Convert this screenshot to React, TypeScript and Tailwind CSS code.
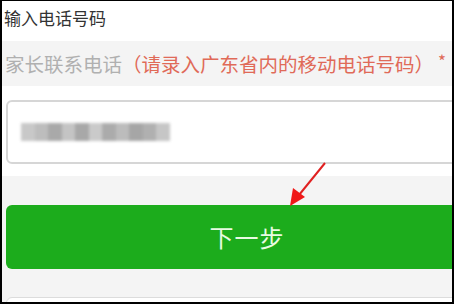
import React from 'react';

const blurBlocks = [
  '#c8c8c8', '#bdbdbd', '#a9a9a9', '#c4c4c4', '#a8a8a8', '#cacaca', '#ababab', '#bcbcbc', '#a6a6a6', '#b0b0b0', '#c6c6c6',
];

const App: React.FC = () => {
  return (
    <div
      className="relative w-[454px] h-[304px] overflow-hidden bg-white border-black border-l-2 border-r-2 border-t border-b-2"
      style={{ fontFamily: '"Noto Sans CJK SC", "Noto Sans", sans-serif' }}
    >
      {/* 标题 */}
      <div className="h-[40px] pl-[2px] pt-[5px] text-[17px] leading-[24px] text-[#333333]">输入电话号码</div>

      {/* 标签 */}
      <div className="h-[45px] bg-[#f4f4f4] flex items-center pl-[3px] text-[19.5px] leading-none whitespace-nowrap">
        <span className="text-[#b0b0b0]">家长联系电话</span>
        <span className="text-[#e06a58]">（请录入广东省内的移动电话号码）</span>
        <span className="text-[#e06a58] ml-[4px] text-[17px] -mt-[6px]">*</span>
      </div>

      {/* 输入框 */}
      <div className="bg-white pt-[14px] pb-[12px] pl-[4px]">
        <div className="w-[520px] h-[64px] border-2 border-[#d6d6d6] rounded-[6px] flex items-center pl-[13px]">
          <div className="flex blur-[1.5px]">
            {blurBlocks.map((c, i) => (
              <div key={i} className="w-[13.5px] h-[18px]" style={{ backgroundColor: c }} />
            ))}
          </div>
        </div>
      </div>

      {/* 按钮区 */}
      <div className="bg-[#f4f4f4] pt-[29px] pl-[4px] h-[200px]">
        <div className="w-[482px] h-[64px] rounded-[6px] bg-[#1cac1c] flex items-center justify-center text-[24px] text-[#e8fbe2] tracking-[1px]">
          下一步
        </div>
        <div className="mt-[28px] w-[520px] h-[40px] bg-white border border-[#dcdcdc] rounded-[6px]" />
      </div>

      {/* 红色箭头 */}
      <svg className="absolute left-0 top-0" width="454" height="304" viewBox="0 0 454 304">
        <line x1="323" y1="162" x2="297" y2="194" stroke="#e02020" strokeWidth="2" />
        <polygon points="288,205 291,187 303,196" fill="#f01818" />
      </svg>
    </div>
  );
};

export default App;
